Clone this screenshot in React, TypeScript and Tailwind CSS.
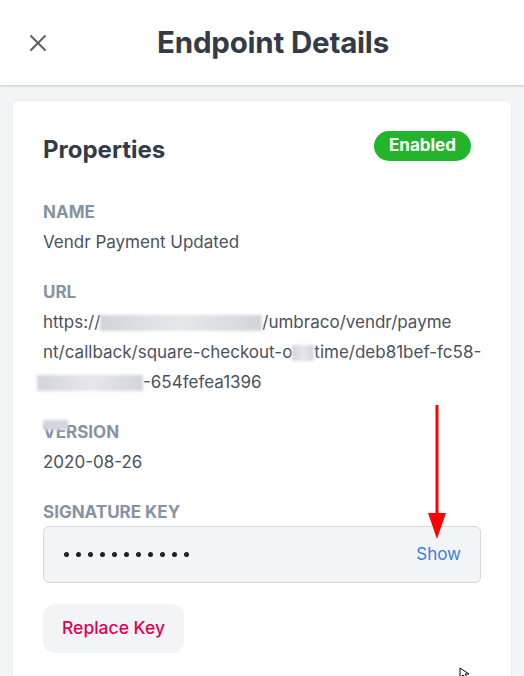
import { X } from 'lucide-react';

function Blur({ w, h = 16 }: { w: number; h?: number }) {
  return (
    <span
      className="inline-block align-middle bg-gradient-to-r from-gray-300 via-gray-200 to-gray-300 blur-[1.5px]"
      style={{ width: w, height: h }}
    />
  );
}

function Field({ label, children }: { label: React.ReactNode; children: React.ReactNode }) {
  return (
    <div>
      <div className="text-[17px] font-bold uppercase text-[#8593a5] leading-[24px]">{label}</div>
      <div className="text-[17px] text-[#4b5160] leading-[30px] mt-[3px]">{children}</div>
    </div>
  );
}

export default function App() {
  return (
    <div className="w-[524px] h-[676px] overflow-hidden bg-[#f3f4f6] relative" style={{ fontFamily: 'Inter, "Open Sans", sans-serif' }}>
      <div className="h-[85px] bg-white flex items-center relative shadow-[0_1px_2px_rgba(0,0,0,0.2)]">
        <X className="absolute left-[24px] top-[29px] w-[28px] h-[28px] text-[#5f6368]" strokeWidth={1.75} />
        <h1 className="w-full text-center pl-[22px] text-[29.5px] font-bold text-[#353b46] tracking-[-0.2px]">Endpoint Details</h1>
      </div>

      <div className="mx-[12px] mt-[15px] bg-white rounded-md border border-[#eceef1] px-[30px] pt-[28px] pb-[40px]">
        <div className="flex items-start justify-between">
          <h2 className="text-[24px] leading-[32px] font-bold text-[#353b46] pt-[5px]">Properties</h2>
          <span className="mt-[2px] bg-[#23b42b] text-white text-[17px] font-bold rounded-full w-[97px] h-[30px] flex items-center justify-center mr-[10px]">
            Enabled
          </span>
        </div>

        <div className="mt-[34px] flex flex-col gap-[23px]">
          <Field label="Name">Vendr Payment Updated</Field>
          <Field label="URL">
            <span className="block whitespace-nowrap">
              https://<Blur w={162} />/umbraco/vendr/payme
            </span>
            <span className="block whitespace-nowrap">
              nt/callback/square-checkout-o<Blur w={22} />time/deb81bef-fc58-
            </span>
            <span className="block whitespace-nowrap -ml-[6px]">
              <Blur w={106} />-654fefea1396
            </span>
          </Field>
          <Field
            label={
              <span className="relative">
                VERSION
                <span className="absolute left-0 -top-[2px] w-[25px] h-[10px] bg-gray-300 blur-[1.5px]" />
              </span>
            }
          >
            2020-08-26
          </Field>
          <div>
            <div className="text-[17px] font-bold uppercase text-[#8593a5] leading-[24px]">Signature Key</div>
            <div className="mt-[2px] h-[57px] bg-[#f3f4f6] border border-[#d4d7dc] rounded-md flex items-center justify-between pl-[20px] pr-[19px]">
              <span className="flex gap-[7px]">
                {Array.from({ length: 11 }).map((_, i) => (
                  <span key={i} className="w-[5px] h-[5px] rounded-full bg-[#1d2128]" />
                ))}
              </span>
              <span className="text-[17px] text-[#3d7de0]">Show</span>
            </div>
          </div>
        </div>

        <button className="mt-[21px] w-[141px] h-[49px] rounded-xl bg-[#f3f4f6] text-[#e3004f] text-[17.5px] font-medium">
          Replace Key
        </button>
      </div>

      <svg className="absolute left-[426px] top-[405px]" width="22" height="135" viewBox="0 0 22 135">
        <line x1="11" y1="0" x2="11" y2="110" stroke="#ff0000" strokeWidth="3" />
        <polygon points="2,108 20,108 11,134" fill="#ff0000" />
      </svg>

      <svg className="absolute left-[459px] top-[667px]" width="12" height="12" viewBox="0 0 12 12">
        <path d="M1 1 L1 11 L4 8 L7 12 L9 11 L6 7 L10 7 Z" fill="white" stroke="black" strokeWidth="1" />
      </svg>
    </div>
  );
}
